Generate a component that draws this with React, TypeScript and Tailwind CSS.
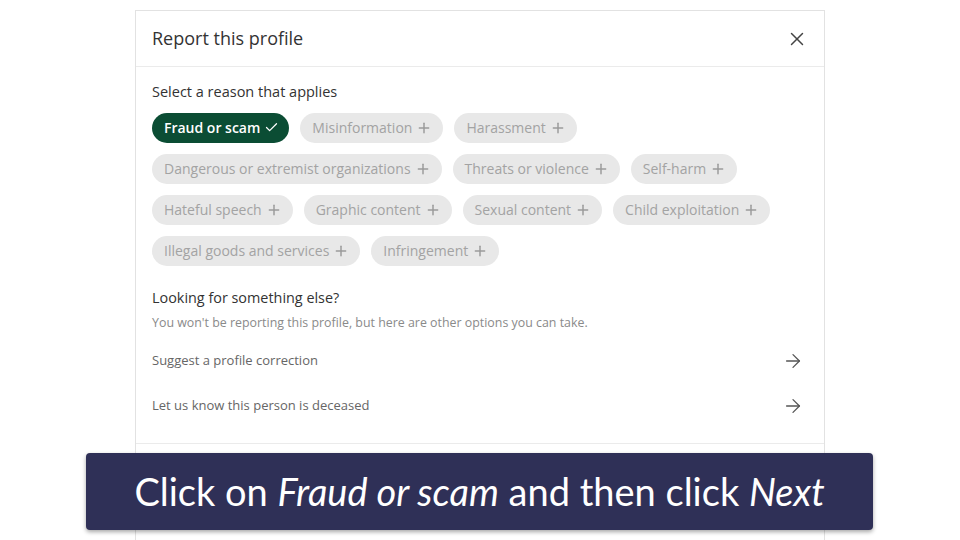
import { X, ArrowRight, Plus, Check } from "lucide-react";

const rows = [
  ["Fraud or scam", "Misinformation", "Harassment"],
  ["Dangerous or extremist organizations", "Threats or violence", "Self-harm"],
  ["Hateful speech", "Graphic content", "Sexual content", "Child exploitation"],
  ["Illegal goods and services", "Infringement"],
];

function Chip({ label }: { label: string }) {
  const active = label === "Fraud or scam";
  if (active) {
    return (
      <span className="flex h-[30px] items-center gap-1 rounded-full bg-[#0b4d34] pl-3 pr-[10px] text-[14px] font-semibold text-white">
        {label}
        <Check size={15} strokeWidth={2} />
      </span>
    );
  }
  return (
    <span className="flex h-[30px] items-center gap-1 rounded-full bg-[#e8e8e8] pl-3 pr-[11px] text-[14px] text-[#a3a3a3]">
      {label}
      <Plus size={16} strokeWidth={2.2} className="text-[#9a9a9a]" />
    </span>
  );
}

export default function App() {
  return (
    <div className="relative h-[540px] w-[960px] overflow-hidden bg-white font-['Open_Sans',sans-serif]">
      <div className="ml-[135px] mt-[10px] h-[560px] w-[690px] border border-[#e2e2e2] bg-white">
        <div className="flex h-[56px] items-center justify-between border-b border-[#ebebeb] pl-4 pr-4">
          <span className="text-[18px] text-[#333]">Report this profile</span>
          <X size={22} strokeWidth={1.6} className="text-[#444]" />
        </div>
        <div className="px-4 pt-[14px]">
          <div className="text-[14.5px] text-[#333]">Select a reason that applies</div>
          <div className="mt-[10px] flex flex-col gap-[11px]">
            {rows.map((r, i) => (
              <div key={i} className="flex gap-[11px]">
                {r.map((l) => (
                  <Chip key={l} label={l} />
                ))}
              </div>
            ))}
          </div>
          <div className="mt-[21px] text-[14.4px] text-[#333]">Looking for something else?</div>
          <div className="mt-[6px] text-[12.4px] text-[#8a8a8a]">
            You won't be reporting this profile, but here are other options you can take.
          </div>
          <div className="mt-[17px] flex items-center justify-between pr-1">
            <span className="text-[13px] text-[#666]">Suggest a profile correction</span>
            <ArrowRight size={22} strokeWidth={1.4} className="text-[#555]" />
          </div>
          <div className="mt-[23px] flex items-center justify-between pr-1">
            <span className="text-[13px] text-[#666]">Let us know this person is deceased</span>
            <ArrowRight size={22} strokeWidth={1.4} className="text-[#555]" />
          </div>
        </div>
        <div className="mt-[26px] border-t border-[#ebebeb]" />
      </div>
      <div className="absolute left-[86px] top-[453px] flex h-[77px] w-[787px] items-center justify-center rounded-[4px] bg-[#2f3057] shadow-[0_2px_4px_rgba(0,0,0,0.35)]">
        <span className="font-['Lato',sans-serif] text-[38px] text-white">
          Click on <i>Fraud or scam</i> and then click <i>Next</i>
        </span>
      </div>
    </div>
  );
}
